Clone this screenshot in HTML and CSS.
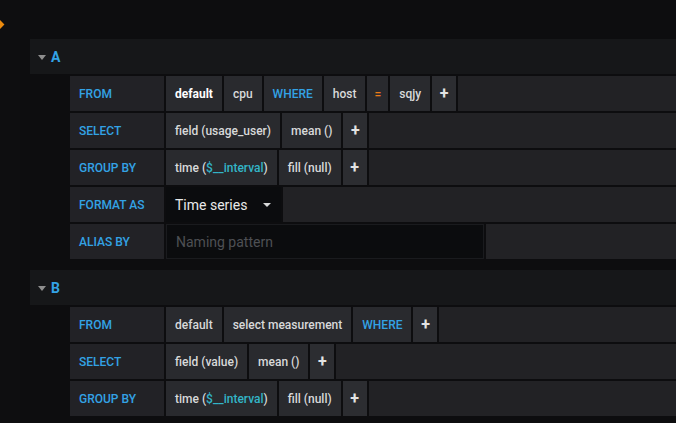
FILE: index.html
```html
<!DOCTYPE html>
<html>
<head>
<meta charset="utf-8">
<link rel="stylesheet" href="styles.css">
</head>
<body>
<div class="page">
  <div class="side"><span class="marker"></span></div>
  <div class="editor">
    <section class="query">
      <div class="qhead"><span class="caret"></span><span class="qname">A</span></div>
      <div class="rows">
        <div class="row">
          <div class="label">FROM</div>
          <div class="seg strong">default</div>
          <div class="seg">cpu</div>
          <div class="seg kw">WHERE</div>
          <div class="seg">host</div>
          <div class="seg op">=</div>
          <div class="seg">sqjy</div>
          <div class="seg plus">+</div>
          <div class="fill"></div>
        </div>
        <div class="row">
          <div class="label">SELECT</div>
          <div class="seg">field (usage_user)</div>
          <div class="seg">mean ()</div>
          <div class="seg plus">+</div>
          <div class="fill"></div>
        </div>
        <div class="row">
          <div class="label">GROUP BY</div>
          <div class="seg">time (<span class="var">$__interval</span>)</div>
          <div class="seg">fill (null)</div>
          <div class="seg plus">+</div>
          <div class="fill"></div>
        </div>
        <div class="row">
          <div class="label">FORMAT AS</div>
          <div class="select">Time series<span class="dd"></span></div>
          <div class="fill"></div>
        </div>
        <div class="row">
          <div class="label">ALIAS BY</div>
          <div class="input">Naming pattern</div>
          <div class="fill"></div>
        </div>
      </div>
    </section>
    <section class="query">
      <div class="qhead"><span class="caret"></span><span class="qname">B</span></div>
      <div class="rows">
        <div class="row">
          <div class="label">FROM</div>
          <div class="seg">default</div>
          <div class="seg">select measurement</div>
          <div class="seg kw">WHERE</div>
          <div class="seg plus">+</div>
          <div class="fill"></div>
        </div>
        <div class="row">
          <div class="label">SELECT</div>
          <div class="seg">field (value)</div>
          <div class="seg">mean ()</div>
          <div class="seg plus">+</div>
          <div class="fill"></div>
        </div>
        <div class="row">
          <div class="label">GROUP BY</div>
          <div class="seg">time (<span class="var">$__interval</span>)</div>
          <div class="seg">fill (null)</div>
          <div class="seg plus">+</div>
          <div class="fill"></div>
        </div>
      </div>
    </section>
  </div>
</div>
</body>
</html>
```
FILE: styles.css
```css
html, body {
  margin: 0;
  padding: 0;
  background: #0c0c0e;
  font-family: Roboto, "Liberation Sans", sans-serif;
  overflow: hidden;
}
.page {
  display: flex;
  width: 676px;
  height: 423px;
  overflow: hidden;
}
.side {
  width: 20px;
  flex: none;
  background: #0e0e10;
  position: relative;
}
.marker {
  position: absolute;
  left: -4px;
  top: 21px;
  width: 7px;
  height: 7px;
  background: #eb8a0e;
  transform: rotate(45deg);
}
.editor {
  flex: 1;
  padding: 39px 0 0 10px;
  display: flex;
  flex-direction: column;
  gap: 11px;
  background: #0d0d0f;
}
.query {
  display: flex;
  flex-direction: column;
  gap: 2px;
}
.qhead {
  height: 35px;
  background: #161719;
  display: flex;
  align-items: center;
  padding-left: 8px;
  gap: 5px;
}
.caret {
  width: 0;
  height: 0;
  border-left: 4px solid transparent;
  border-right: 4px solid transparent;
  border-top: 5px solid #8e8e8e;
  margin-top: 1px;
}
.qname {
  color: #33a2e5;
  font-weight: 700;
  font-size: 14px;
}
.rows {
  margin-left: 40px;
  display: flex;
  flex-direction: column;
  gap: 2px;
}
.row {
  display: flex;
  height: 35px;
  gap: 2px;
}
.label {
  width: 85px;
  flex: none;
  padding-left: 9px;
  background: #222226;
  color: #33a2e5;
  font-size: 12px;
  font-weight: 500;
  display: flex;
  align-items: center;
}
.seg {
  flex: none;
  padding: 0 9px;
  background: #292a2e;
  color: #d8d9da;
  font-size: 12px;
  font-weight: 500;
  display: flex;
  align-items: center;
  white-space: pre;
}
.seg.strong { color: #ffffff; font-weight: 700; }
.seg.kw { color: #33a2e5; }
.seg.op { color: #eb7b18; padding: 0 7px; }
.seg.plus {
  width: 24px;
  padding: 0;
  justify-content: center;
  font-size: 16px;
  font-weight: 700;
  color: #e3e3e3;
  background: #2c2d31;
}
.var { color: #33b5c7; }
.fill {
  flex: 1;
  background: #222225;
}
.select {
  width: 106px;
  flex: none;
  padding-left: 9px;
  background: #0b0c0e;
  color: #e9e9e9;
  font-size: 14px;
  display: flex;
  align-items: center;
}
.dd {
  margin-left: 16px;
  width: 0;
  height: 0;
  border-left: 4px solid transparent;
  border-right: 4px solid transparent;
  border-top: 4px solid #d8d9da;
}
.input {
  flex: none;
  padding-left: 9px;
  background: #0b0c0e;
  color: #4e5054;
  font-size: 14px;
  display: flex;
  align-items: center;
  border: 1px solid #1a1b1e;
  box-sizing: border-box;
  width: 318px;
}
```
